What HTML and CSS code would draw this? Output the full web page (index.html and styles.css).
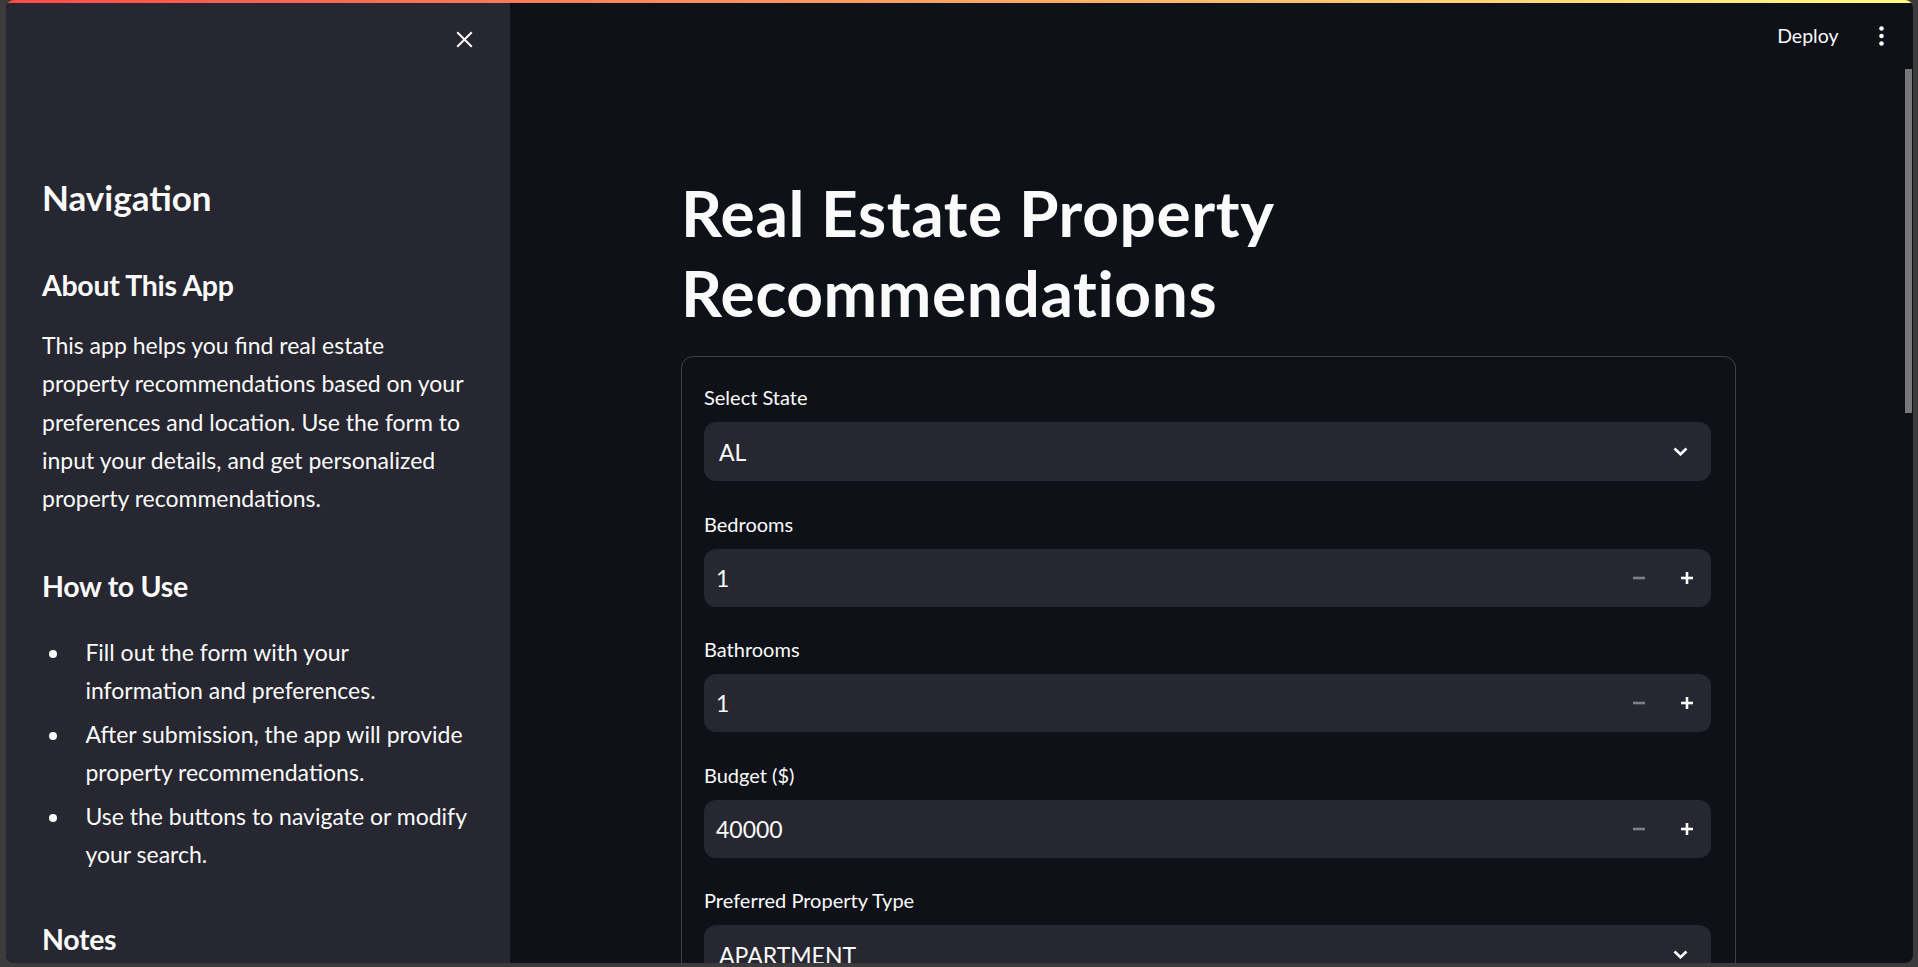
FILE: index.html
```html
<!DOCTYPE html>
<html lang="en">
<head>
<meta charset="utf-8">
<title>Real Estate Property Recommendations</title>
<link rel="stylesheet" href="styles.css">
</head>
<body>
<div class="window">
  <div class="decoration"></div>
  <aside class="sidebar">
    <div class="sidebar-header">
      <button class="icon-btn close-btn" aria-label="Close sidebar">
        <svg width="17" height="17" viewBox="0 0 17 17"><path d="M1.2 1.2L15.8 15.8M15.8 1.2L1.2 15.8" stroke="#fafafa" stroke-width="2" fill="none"/></svg>
      </button>
    </div>
    <div class="sidebar-content">
      <h2 class="sb-h2">Navigation</h2>
      <h3 class="sb-h3 sb-about">About This App</h3>
      <p class="sb-p">This app helps you find real estate<br>property recommendations based on your<br>preferences and location. Use the form to<br>input your details, and get personalized<br>property recommendations.</p>
      <h3 class="sb-h3 sb-how">How to Use</h3>
      <ul class="sb-list">
        <li>Fill out the form with your<br>information and preferences.</li>
        <li>After submission, the app will provide<br>property recommendations.</li>
        <li>Use the buttons to navigate or modify<br>your search.</li>
      </ul>
      <h3 class="sb-h3 sb-notes">Notes</h3>
    </div>
  </aside>
  <main class="main">
    <header class="topbar">
      <span class="deploy">Deploy</span>
      <button class="icon-btn kebab" aria-label="Main menu">
        <svg width="5" height="20" viewBox="0 0 5 20"><circle cx="2.5" cy="2.5" r="2.3" fill="#fafafa"/><circle cx="2.5" cy="10" r="2.3" fill="#fafafa"/><circle cx="2.5" cy="17.5" r="2.3" fill="#fafafa"/></svg>
      </button>
    </header>
    <div class="block">
      <h1 class="title">Real Estate Property Recommendations</h1>
      <form class="form">
        <div class="field">
          <div class="field-label">Select State</div>
          <div class="select">
            <span class="value">AL</span>
            <svg class="chevron" width="15" height="9" viewBox="0 0 15 9"><path d="M1.5 1.5L7.5 7.3L13.5 1.5" stroke="#fafafa" stroke-width="2.6" fill="none"/></svg>
          </div>
        </div>
        <div class="field">
          <div class="field-label">Bedrooms</div>
          <div class="number">
            <span class="value num">1</span>
            <span class="step"><svg width="12" height="12" viewBox="0 0 12 12"><rect x="0" y="4.7" width="12" height="2.6" fill="#7d7f89"/></svg></span>
            <span class="step"><svg width="12" height="12" viewBox="0 0 12 12"><rect x="0" y="4.7" width="12" height="2.6" fill="#fafafa"/><rect x="4.7" y="0" width="2.6" height="12" fill="#fafafa"/></svg></span>
          </div>
        </div>
        <div class="field">
          <div class="field-label">Bathrooms</div>
          <div class="number">
            <span class="value num">1</span>
            <span class="step"><svg width="12" height="12" viewBox="0 0 12 12"><rect x="0" y="4.7" width="12" height="2.6" fill="#7d7f89"/></svg></span>
            <span class="step"><svg width="12" height="12" viewBox="0 0 12 12"><rect x="0" y="4.7" width="12" height="2.6" fill="#fafafa"/><rect x="4.7" y="0" width="2.6" height="12" fill="#fafafa"/></svg></span>
          </div>
        </div>
        <div class="field">
          <div class="field-label">Budget ($)</div>
          <div class="number">
            <span class="value num">40000</span>
            <span class="step"><svg width="12" height="12" viewBox="0 0 12 12"><rect x="0" y="4.7" width="12" height="2.6" fill="#7d7f89"/></svg></span>
            <span class="step"><svg width="12" height="12" viewBox="0 0 12 12"><rect x="0" y="4.7" width="12" height="2.6" fill="#fafafa"/><rect x="4.7" y="0" width="2.6" height="12" fill="#fafafa"/></svg></span>
          </div>
        </div>
        <div class="field">
          <div class="field-label">Preferred Property Type</div>
          <div class="select">
            <span class="value">APARTMENT</span>
            <svg class="chevron" width="15" height="9" viewBox="0 0 15 9"><path d="M1.5 1.5L7.5 7.3L13.5 1.5" stroke="#fafafa" stroke-width="2.6" fill="none"/></svg>
          </div>
        </div>
      </form>
    </div>
  </main>
  <div class="scroll-thumb"></div>
</div>
</body>
</html>
```

FILE: styles.css
```css
* { box-sizing: border-box; }

html, body {
  margin: 0;
  padding: 0;
  background: #3b3b3b;
  height: 100%;
  overflow: hidden;
}

body {
  font-family: Lato, "Liberation Sans", sans-serif;
  color: #fafafa;
}

.window {
  position: relative;
  margin-left: 6px;
  width: 1907px;
  height: 963px;
  border-radius: 8px;
  overflow: hidden;
  display: flex;
  background: #0e1117;
}

.decoration {
  position: absolute;
  top: 0;
  left: 0;
  right: 0;
  height: 3px;
  background: linear-gradient(90deg, #ff4b4b, #fffd80);
  z-index: 5;
}

.icon-btn {
  border: 0;
  background: transparent;
  padding: 0;
  margin: 0;
  display: flex;
  align-items: center;
  justify-content: center;
  cursor: pointer;
}

/* Sidebar */
.sidebar {
  width: 504px;
  flex: 0 0 504px;
  background: #262730;
  display: flex;
  flex-direction: column;
}

.sidebar-header {
  display: flex;
  justify-content: flex-end;
  padding: 31px 37px 0 0;
  height: 48px;
}

.sidebar-content {
  padding: 129px 36px 0 36px;
}

.sb-h2 {
  margin: 0;
  font-size: 35px;
  line-height: 41px;
  font-weight: 700;
}

.sb-h3 {
  margin: 0;
  font-size: 28.5px;
  line-height: 34.2px;
  font-weight: 700;
  letter-spacing: -0.3px;
}

.sb-about { margin-top: 50.4px; }
.sb-how { margin-top: 50.9px; }
.sb-notes { margin-top: 49.1px; }

.sb-p {
  margin: 23.2px 0 0 0;
  font-size: 23px;
  line-height: 38.4px;
  white-space: nowrap;
}

.sb-list {
  margin: 29.8px 0 0 0;
  padding: 0;
  font-size: 23px;
  line-height: 38.4px;
  white-space: nowrap;
}

.sb-list li {
  margin: 0 0 5.1px 29px;
  padding-left: 14.4px;
}

.sb-list li:last-child { margin-bottom: 0; }

/* Main */
.main {
  flex: 1 1 auto;
  display: flex;
  flex-direction: column;
  padding-right: 6px;
  min-width: 0;
}

.topbar {
  height: 72px;
  display: flex;
  justify-content: flex-end;
  align-items: center;
  padding-right: 29.5px;
  margin-right: -6px;
  flex: 0 0 72px;
}

.deploy {
  font-size: 19.5px;
  line-height: 24px;
  margin-right: 40px;
}

.kebab { width: 5px; height: 20px; }

.block {
  width: 1055px;
  align-self: center;
  padding-top: 101.3px;
}

.title {
  margin: 0;
  font-size: 64px;
  line-height: 79.2px;
  font-weight: 700;
  letter-spacing: 0.6px;
}

.form {
  margin-top: 24.3px;
  border: 1px solid rgba(250, 250, 250, 0.2);
  border-radius: 12px;
  padding: 23px 24px 40px 22px;
}

.field + .field { margin-top: 25.5px; }

.field-label {
  height: 36px;
  line-height: 34px;
  font-size: 20px;
  margin-bottom: 6px;
}

.select, .number {
  background: #262730;
  border-radius: 12px;
  display: flex;
  align-items: center;
  font-size: 23px;
}

.select {
  height: 59px;
  padding: 0 23px 0 15px;
}

.number {
  height: 58px;
  padding-left: 12px;
}

.value { flex: 1 1 auto; }

.chevron { flex: 0 0 auto; }

.step {
  width: 48px;
  height: 100%;
  display: flex;
  align-items: center;
  justify-content: center;
  flex: 0 0 48px;
}

.scroll-thumb {
  position: absolute;
  right: 1px;
  top: 69px;
  width: 7px;
  height: 344px;
  background: #77777b;
}
```
